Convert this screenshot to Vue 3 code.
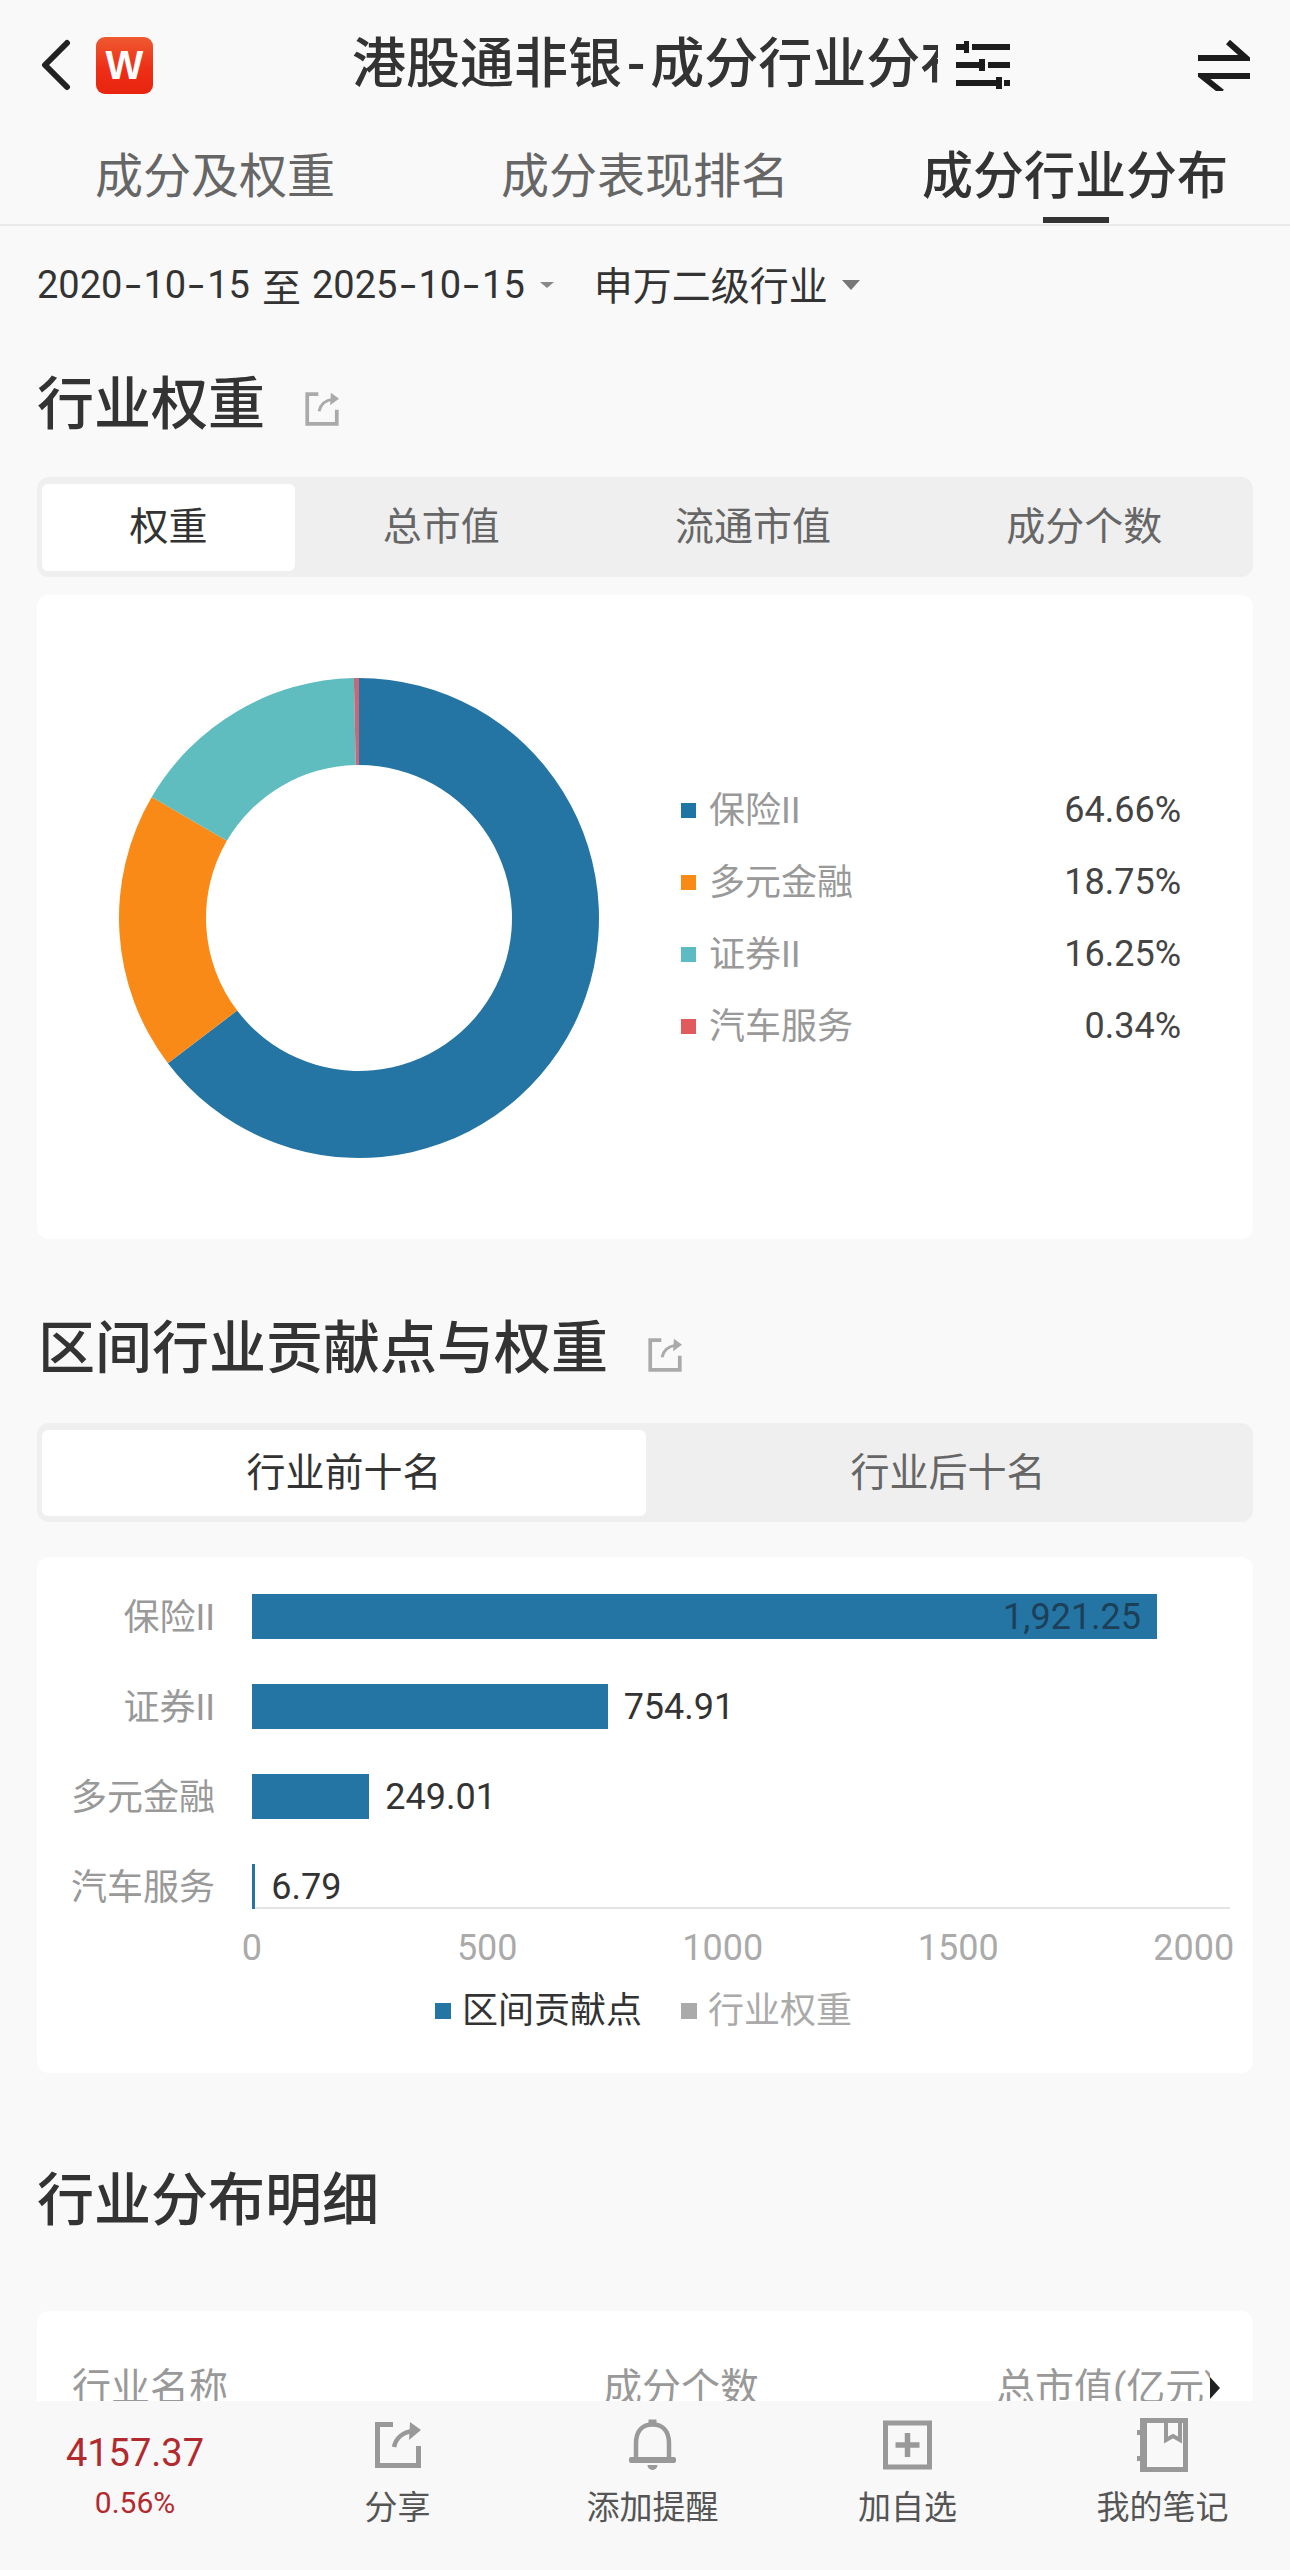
<script setup>
const slices = [
  { name: '保险II', value: 64.66, color: '#2475a4', swatch: '#1f74a6' },
  { name: '多元金融', value: 18.75, color: '#f98a17', swatch: '#f98a16' },
  { name: '证券II', value: 16.25, color: '#5fbcbf', swatch: '#5dbcc3' },
  { name: '汽车服务', value: 0.34, color: '#c4687a', swatch: '#e05a5e' },
]

const cx = 241
const cy = 241
const outer = 240
const inner = 153

function pt(r, deg) {
  const a = (deg * Math.PI) / 180
  return `${(cx + r * Math.sin(a)).toFixed(2)} ${(cy - r * Math.cos(a)).toFixed(2)}`
}

const total = slices.reduce((s, x) => s + x.value, 0)
let acc = 0
const arcs = slices.map((s) => {
  const start = (acc / total) * 360
  acc += s.value
  const end = (acc / total) * 360
  const large = end - start > 180 ? 1 : 0
  return {
    color: s.color,
    d: `M${pt(outer, start)} A${outer} ${outer} 0 ${large} 1 ${pt(outer, end)} L${pt(inner, end)} A${inner} ${inner} 0 ${large} 0 ${pt(inner, start)} Z`,
  }
})

const pxPerUnit = 0.4711
const bars = [
  { name: '保险II', value: 1921.25, text: '1,921.25', inside: true },
  { name: '证券II', value: 754.91, text: '754.91' },
  { name: '多元金融', value: 249.01, text: '249.01' },
  { name: '汽车服务', value: 6.79, text: '6.79' },
]
const ticks = ['0', '500', '1000', '1500', '2000']
const weightTabs = ['权重', '总市值', '流通市值', '成分个数']
</script>

<template>
  <div class="page">
    <div class="main">
      <header class="top">
        <svg class="back" viewBox="0 0 34 52" width="34" height="52">
          <path d="M27 4 L5 26 L27 48" fill="none" stroke="#222" stroke-width="6" stroke-linecap="round" stroke-linejoin="round" />
        </svg>
        <div class="logo">W</div>
        <div class="title"><span>港股通非银</span><i class="dash">-</i><span>成分行业分布</span></div>
        <svg class="sliders" viewBox="0 0 54 48" width="54" height="48">
          <g fill="#1c1c1c">
            <rect x="0" y="3" width="9" height="6" />
            <rect x="8" y="0" width="5" height="12" />
            <rect x="16" y="3" width="38" height="6" />
            <rect x="0" y="21" width="24" height="6" />
            <rect x="23" y="18" width="6" height="12" />
            <rect x="32" y="21" width="22" height="6" />
            <rect x="0" y="39" width="40" height="6" />
            <rect x="40" y="36" width="6" height="12" />
            <rect x="48" y="39" width="6" height="6" />
          </g>
        </svg>
        <svg class="swap" viewBox="0 0 52 52" width="52" height="52">
          <path d="M0 19 H48 L30 3" fill="none" stroke="#1c1c1c" stroke-width="6" />
          <path d="M52 37 H4 L24 53" fill="none" stroke="#1c1c1c" stroke-width="6" />
        </svg>
      </header>

      <nav class="tabs">
        <div class="tab">成分及权重</div>
        <div class="tab">成分表现排名</div>
        <div class="tab active">成分行业分布</div>
      </nav>

      <div class="filter">
        <span class="date">2020<i class="hy">-</i>10<i class="hy">-</i>15</span>
        <span class="to">至</span>
        <span class="date">2025<i class="hy">-</i>10<i class="hy">-</i>15</span>
        <span class="caret small"></span>
        <span class="sw">申万二级行业</span>
        <span class="caret"></span>
      </div>

      <h2 class="sec first">
        <span>行业权重</span>
        <svg class="share-s" viewBox="0 0 46 46" width="34" height="34">
          <path d="M18 3 H3 V43 H43 V24" fill="none" stroke="#aaa" stroke-width="5" />
          <path d="M19 26 C21 17 28 11 38 10" fill="none" stroke="#aaa" stroke-width="4" />
          <polygon points="35,1 46,9 34,18" fill="#aaa" />
        </svg>
      </h2>
      <div class="seg">
        <div v-for="(t, i) in weightTabs" :key="t" class="seg-item" :class="{ on: i === 0 }">{{ t }}</div>
      </div>

      <section class="card donut-card">
        <svg class="donut" viewBox="0 0 482 482" width="482" height="482">
          <path v-for="a in arcs" :key="a.color" :d="a.d" :fill="a.color" />
        </svg>
        <ul class="legend">
          <li v-for="s in slices" :key="s.name" class="legend-row">
            <span class="sq" :style="{ background: s.swatch }"></span>
            <span class="legend-name">{{ s.name }}</span>
            <span class="legend-val">{{ s.value.toFixed(2) }}%</span>
          </li>
        </ul>
      </section>

      <h2 class="sec second">
        <span>区间行业贡献点与权重</span>
        <svg class="share-s" viewBox="0 0 46 46" width="34" height="34">
          <path d="M18 3 H3 V43 H43 V24" fill="none" stroke="#aaa" stroke-width="5" />
          <path d="M19 26 C21 17 28 11 38 10" fill="none" stroke="#aaa" stroke-width="4" />
          <polygon points="35,1 46,9 34,18" fill="#aaa" />
        </svg>
      </h2>
      <div class="seg two">
        <div class="seg-item half on">行业前十名</div>
        <div class="seg-item half">行业后十名</div>
      </div>

      <section class="card bar-card">
        <div class="bars">
          <div v-for="b in bars" :key="b.name" class="bar-row">
            <span class="bar-name">{{ b.name }}</span>
            <span class="bar" :style="{ width: b.value * pxPerUnit + 'px' }">
              <span v-if="b.inside" class="val-in">{{ b.text }}</span>
            </span>
            <span v-if="!b.inside" class="val">{{ b.text }}</span>
          </div>
        </div>
        <div class="axis"></div>
        <div class="ticks">
          <span v-for="t in ticks" :key="t" class="tick">{{ t }}</span>
        </div>
        <div class="bar-legend">
          <span class="sq big blue"></span><span class="lg-on">区间贡献点</span>
          <span class="sq big gray"></span><span class="lg-off">行业权重</span>
        </div>
      </section>

      <h2 class="sec third"><span>行业分布明细</span></h2>
      <section class="card table-card">
        <div class="thead">
          <span class="c1">行业名称</span>
          <span class="c2">成分个数</span>
          <span class="c3">总市值(亿元)</span>
          <span class="more"></span>
        </div>
      </section>
    </div>

    <footer class="foot">
      <div class="index">
        <div class="idx-num">4157.37</div>
        <div class="idx-pct">0.56%</div>
      </div>
      <div class="act">
        <svg viewBox="0 0 46 46" width="46" height="46">
          <path d="M18 2.5 H2.5 V43.5 H43.5 V24" fill="none" stroke="#999" stroke-width="5" />
          <path d="M19 25 C21 16 28 10 38 9" fill="none" stroke="#999" stroke-width="4.5" />
          <polygon points="35,0 46,8 34,18" fill="#999" />
        </svg>
        <span>分享</span>
      </div>
      <div class="act">
        <svg viewBox="0 0 47 51" width="47" height="51">
          <rect x="19.5" y="0" width="8" height="6" fill="#999" />
          <path d="M7 40 V24 C7 11 14 5 23.5 5 C33 5 40 11 40 24 V40" fill="none" stroke="#999" stroke-width="4.5" />
          <rect x="0" y="37.5" width="47" height="6" rx="2" fill="#999" />
          <path d="M18.5 45.5 H28.5 A5 5 0 0 1 18.5 45.5 Z" fill="#999" />
        </svg>
        <span>添加提醒</span>
      </div>
      <div class="act">
        <svg viewBox="0 0 49 49" width="49" height="49">
          <rect x="2.5" y="2.5" width="44" height="44" fill="none" stroke="#999" stroke-width="5" />
          <path d="M12.5 24.5 H36.5 M24.5 12.5 V36.5" fill="none" stroke="#999" stroke-width="5.5" />
        </svg>
        <span>加自选</span>
      </div>
      <div class="act">
        <svg viewBox="0 0 51 54" width="51" height="54">
          <rect x="5.5" y="2.5" width="43" height="49" fill="none" stroke="#999" stroke-width="5" />
          <rect x="3" y="0" width="7" height="54" fill="#999" />
          <rect x="0" y="12" width="10" height="5" fill="#999" />
          <rect x="0" y="38" width="10" height="5" fill="#999" />
          <path d="M29 3 V22 L36 18 L43 22 V3" fill="none" stroke="#999" stroke-width="4" />
        </svg>
        <span>我的笔记</span>
      </div>
    </footer>
  </div>
</template>

<style>
html,
body {
  margin: 0;
  background: #f9f9f9;
}
</style>

<style scoped>
.page {
  width: 1290px;
  height: 2570px;
  display: flex;
  flex-direction: column;
  overflow: hidden;
  background: #f9f9f9;
  color: #333;
  font-family: Roboto, "Noto Sans CJK SC", sans-serif;
}
.main {
  flex: 1 1 0;
  min-height: 0;
  overflow: hidden;
}
.top {
  height: 130px;
  display: flex;
  align-items: center;
}
.back {
  margin-left: 40px;
}
.logo {
  width: 57px;
  height: 57px;
  margin-left: 22px;
  border-radius: 9px;
  background: linear-gradient(180deg, #ee5a30 0%, #ee2f16 55%, #e8240f 100%);
  color: #fff;
  font: 700 40px/57px "Liberation Sans", sans-serif;
  text-align: center;
}
.title {
  width: 586px;
  margin-left: 199px;
  overflow: hidden;
  white-space: nowrap;
  font-size: 54px;
  line-height: 80px;
  font-weight: 500;
  color: #333;
}
.dash {
  font-style: normal;
  margin: 0 5px;
}
.sliders {
  margin-left: 18px;
}
.swap {
  margin-left: 188px;
}
.tabs {
  height: 94px;
  display: grid;
  grid-template-columns: repeat(3, 430px);
  border-bottom: 2px solid #e9e9e9;
}
.tab {
  position: relative;
  text-align: center;
  font-size: 48px;
  line-height: 94px;
  color: #666;
}
.tab.active {
  font-size: 51px;
  font-weight: 500;
  color: #333;
}
.tab.active::after {
  content: "";
  position: absolute;
  left: 183px;
  bottom: 1px;
  width: 66px;
  height: 6px;
  background: #333;
}
.filter {
  height: 117px;
  display: flex;
  align-items: center;
  padding-left: 37px;
  font-size: 38px;
  color: #333;
}
.hy {
  display: inline-block;
  font-style: normal;
  margin: 0 5.25px;
  transform: scaleX(1.5);
}
.to {
  margin: 0 11px 0 12px;
  font-size: 39px;
}
.caret {
  width: 0;
  height: 0;
  margin-left: 14px;
  border-left: 9px solid transparent;
  border-right: 9px solid transparent;
  border-top: 10px solid #777;
}
.caret.small {
  margin-left: 15px;
  border-left-width: 7px;
  border-right-width: 7px;
  border-top-width: 6px;
  border-top-color: #888;
}
.sw {
  margin-left: 40px;
  padding-bottom: 3px;
  font-size: 39px;
}
.sec {
  height: 116px;
  box-sizing: border-box;
  margin: 0;
  padding-left: 37px;
  padding-bottom: 8px;
  display: flex;
  align-items: center;
  font-size: 57px;
  font-weight: 500;
  color: #333;
}
.sec.first {
  padding-bottom: 4px;
}
.share-s {
  margin-left: 40px;
  margin-top: 24px;
}
.sec.first .share-s {
  margin-top: 20px;
}
.seg {
  height: 100px;
  box-sizing: border-box;
  margin: 18px 37px 0;
  padding: 7px 3px 6px 5px;
  display: flex;
  border-radius: 12px;
  background: #efefef;
}
.seg-item {
  flex: 1 1 auto;
  padding: 0 80px;
  text-align: center;
  white-space: nowrap;
  font-size: 39px;
  line-height: 87px;
  color: #666;
  border-radius: 6px;
}
.seg-item.half {
  flex: 1 1 0;
  padding: 0;
}
.seg-item.on {
  background: #fff;
  color: #333;
}
.card {
  margin: 0 37px;
  background: #fff;
  border-radius: 12px;
}
.donut-card {
  margin-top: 18px;
  height: 644px;
  box-sizing: border-box;
  padding: 82px 0 0 81px;
  display: flex;
  align-items: flex-start;
}
.donut {
  flex: none;
}
.legend {
  list-style: none;
  width: 500px;
  margin: 97px 0 0 81px;
  padding: 0;
}
.legend-row {
  height: 72px;
  display: flex;
  align-items: center;
  font-size: 36px;
}
.sq {
  flex: none;
  width: 15px;
  height: 15px;
}
.legend-name {
  margin-left: 13px;
  padding-bottom: 7px;
  color: #999;
}
.legend-val {
  margin-left: auto;
  color: #444;
}
.second {
  margin-top: 50px;
  padding-left: 38px;
}
.two {
  height: 99px;
  padding-bottom: 6px;
}
.bar-card {
  margin-top: 35px;
  height: 516px;
  box-sizing: border-box;
  padding-top: 37px;
}
.bars {
  display: flex;
  flex-direction: column;
  gap: 45px;
}
.bar-row {
  height: 45px;
  display: flex;
  align-items: center;
  font-size: 36px;
}
.bar-name {
  flex: none;
  width: 178px;
  margin-right: 37px;
  padding-bottom: 6px;
  text-align: right;
  color: #999;
}
.bar {
  flex: none;
  height: 45px;
  display: flex;
  align-items: center;
  justify-content: flex-end;
  background: #2475a4;
}
.val-in {
  padding-right: 16px;
  color: #1c4058;
}
.val {
  margin-left: 16px;
  color: #333;
}
.axis {
  height: 2px;
  margin: -2px 23px 0 215px;
  background: #e4e4e4;
}
.ticks {
  display: flex;
  margin: 14px 0 0 97px;
}
.tick {
  flex: none;
  width: 235.5px;
  text-align: center;
  font-size: 36px;
  line-height: 50px;
  color: #aaa;
}
.bar-legend {
  margin-top: 13px;
  padding-left: 398px;
  display: flex;
  align-items: center;
  font-size: 36px;
  line-height: 50px;
}
.sq.big {
  width: 16px;
  height: 16px;
}
.blue {
  background: #2475a4;
}
.gray {
  background: #aaa;
  margin-left: 39px;
}
.lg-on {
  margin-left: 11px;
  color: #333;
}
.lg-off {
  margin-left: 11px;
  color: #aaa;
}
.third {
  margin-top: 68px;
}
.table-card {
  margin-top: 54px;
  height: 400px;
  position: relative;
}
.thead {
  position: relative;
  padding: 53px 0 0 35px;
  display: flex;
  font-size: 39px;
  line-height: 48px;
  color: #999;
}
.c1 {
  flex: none;
  width: 531px;
}
.c2 {
  flex: none;
  width: 393px;
}
.c3 {
  flex: none;
  width: 214px;
  overflow: hidden;
  white-space: nowrap;
}
.more {
  position: absolute;
  left: 1173px;
  top: 66px;
  width: 0;
  height: 0;
  border-top: 11px solid transparent;
  border-bottom: 11px solid transparent;
  border-left: 10px solid #222;
}
.foot {
  flex: none;
  height: 169px;
  display: grid;
  grid-template-columns: 270px repeat(4, 255px);
  background: #f8f8f8;
}
.index {
  padding-top: 32px;
  text-align: center;
  color: #b22a2e;
}
.idx-num {
  font-size: 38px;
  line-height: 40px;
}
.idx-pct {
  margin-top: 10px;
  font-size: 30px;
  line-height: 40px;
}
.act {
  position: relative;
  display: flex;
  flex-direction: column;
  align-items: center;
  padding-top: 17px;
}
.act svg {
  height: 54px;
  flex: none;
}
.act span {
  margin-top: 14px;
  font-size: 33px;
  line-height: 44px;
  color: #555;
}
</style>
